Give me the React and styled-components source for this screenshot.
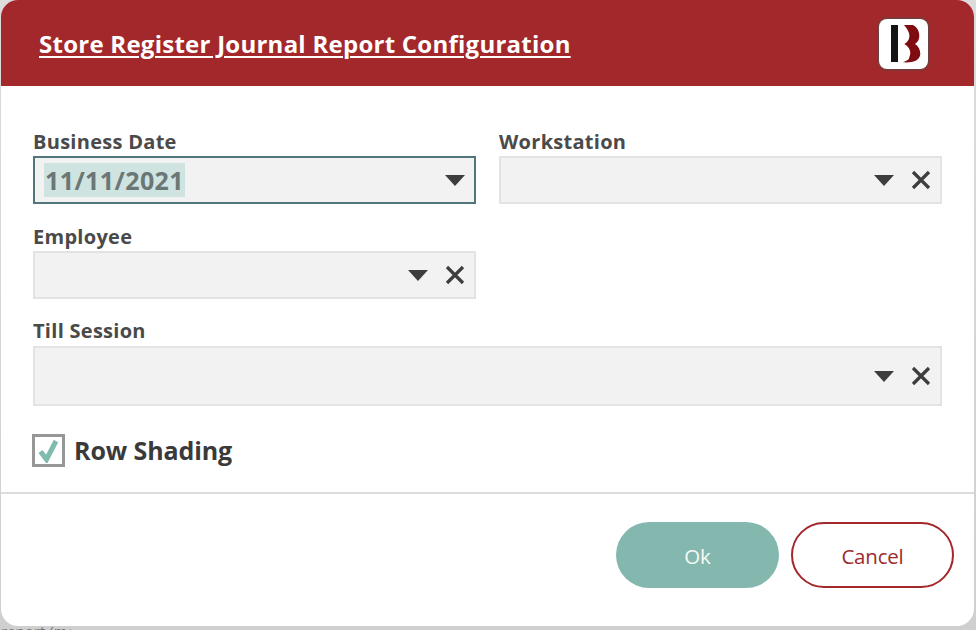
import React from "react";
import styled, { createGlobalStyle } from "styled-components";

const Global = createGlobalStyle`
  html, body { margin: 0; padding: 0; background: #c9c9c9; }
  body { width: 976px; height: 630px; overflow: hidden; font-family: "Open Sans", "Noto Sans", sans-serif; }
`;

const Page = styled.div`
  width: 976px;
  height: 630px;
  padding-left: 1px;
  box-sizing: border-box;
  background: linear-gradient(#dcdcdc, #cfcfcf);
`;

const Dialog = styled.div`
  width: 973px;
  height: 626px;
  background: #fff;
  border-radius: 17px;
  overflow: hidden;
  display: flex;
  flex-direction: column;
`;

const Behind = styled.div`
  width: 70px;
  height: 4px;
  overflow: hidden;
  font-size: 15px;
  line-height: 11px;
  color: #777;
  white-space: nowrap;
`;

const Header = styled.header`
  height: 86px;
  flex: none;
  background: #a3282b;
  display: flex;
  align-items: center;
  justify-content: space-between;
  padding: 2px 46px 0 38px;
  box-sizing: border-box;
`;

const Title = styled.h1`
  margin: 0;
  font-size: 24px;
  line-height: 30px;
  font-weight: 700;
  letter-spacing: 0.25px;
  color: #fff;
  text-decoration: underline;
  text-decoration-thickness: 2px;
  text-underline-offset: 3px;
`;

const Logo = styled.div`
  width: 49px;
  height: 50px;
  background: #fff;
  border-radius: 8px;
  box-shadow: 0 0 2px 1px #5a4a4a;
  display: flex;
  align-items: center;
  justify-content: center;
`;

const Body = styled.main`
  height: 408px;
  flex: none;
  box-sizing: border-box;
  padding: 45px 32px 0;
  border-bottom: 2px solid #dcdcdc;
`;

const Grid = styled.div`
  display: grid;
  grid-template-columns: 443px 443px;
  column-gap: 23px;
`;

const Field = styled.div`
  grid-column: ${(p) => (p.$wide ? "1 / -1" : "auto")};
  margin-bottom: ${(p) => p.$gap}px;
`;

const Label = styled.label`
  display: block;
  height: 25px;
  font-size: 20px;
  line-height: ${(p) => p.$lh || 21}px;
  font-weight: 700;
  letter-spacing: 0.28px;
  color: #4a4a4a;
`;

const Control = styled.div`
  height: ${(p) => p.$height}px;
  box-sizing: border-box;
  background: #f2f2f2;
  border: ${(p) => (p.$focus ? "2px solid #4f7678" : "2px solid #e3e3e3")};
  display: flex;
  align-items: center;
  padding: ${(p) => (p.$focus ? "0 9px" : "0 9px 0 0")};
`;

const Value = styled.span`
  background: #cfe3e1;
  color: #6b7775;
  font-size: 25px;
  line-height: 33px;
  font-weight: 700;
  padding: 1px 1px 0;
  letter-spacing: 0.4px;
`;

const Spacer = styled.div`
  flex: 1;
`;

const Arrow = styled.svg`
  width: 20px;
  height: 11px;
  flex: none;
  margin-right: ${(p) => p.$mr}px;
  fill: #3d3d3d;
`;

const Clear = styled.svg`
  width: 20px;
  height: 20px;
  flex: none;
  stroke: #3d3d3d;
  stroke-width: 3.2;
  fill: none;
`;

const CheckRow = styled.div`
  display: flex;
  align-items: center;
  gap: 9px;
  margin: 27px 0 0 -1px;
`;

const Box = styled.div`
  width: 33px;
  height: 33px;
  box-sizing: border-box;
  border: 3px solid #979797;
  background: #fff;
  display: flex;
  align-items: center;
  justify-content: center;
`;

const CheckLabel = styled.span`
  font-size: 25px;
  line-height: 34px;
  font-weight: 700;
  letter-spacing: -0.1px;
  color: #3a3a3a;
`;

const Footer = styled.footer`
  flex: 1;
  display: flex;
  justify-content: flex-end;
  align-items: flex-start;
  gap: 12px;
  padding: 28px 20px 0 0;
`;

const Button = styled.button`
  width: 163px;
  height: 66px;
  border-radius: 33px;
  box-sizing: border-box;
  font-family: inherit;
  font-size: 20.5px;
  letter-spacing: -0.2px;
  background: ${(p) => (p.$primary ? "#84b8ae" : "#fff")};
  color: ${(p) => (p.$primary ? "#f4faf8" : "#9b2b2e")};
  border: ${(p) => (p.$primary ? "none" : "2px solid #a3282b")};
  padding: 2px 0 0;
`;

const Select = ({ height, focus, value, clearable = true }) => (
  <Control $height={height} $focus={focus}>
    {value && <Value>{value}</Value>}
    <Spacer />
    <Arrow $mr={clearable ? 17 : 0} viewBox="0 0 20 11">
      <path d="M0 0H20L10 11Z" />
    </Arrow>
    {clearable && (
      <Clear viewBox="0 0 20 20">
        <path d="M2 2L18 18M18 2L2 18" />
      </Clear>
    )}
  </Control>
);

export default function App() {
  return (
    <>
      <Global />
      <Page>
        <Dialog>
          <Header>
            <Title>Store Register Journal Report Configuration</Title>
            <Logo>
              <svg width="34" height="46" viewBox="0 0 34 46">
                <rect x="4" y="4" width="7" height="37" fill="#141414" />
                <path
                  d="M17 4H25.7C30 6 32.3 10 32.3 14.7C32.3 18 31 21 28 23C31.5 25 33.3 29 33.3 33C33 37 30 40 25.7 40.7C22 41.5 19 41.5 16 41.3C19 40 22.3 39 22.3 36.3C23.3 34 23.5 31.5 23 29.7C22 26.5 20 24.5 17.3 23C20 21.5 22 19 22.3 16.3C22.8 13 21.7 9.7 17 4Z"
                  fill="#7e0c10"
                />
              </svg>
            </Logo>
          </Header>
          <Body>
            <Grid>
              <Field $gap={22}>
                <Label>Business Date</Label>
                <Select height={48} focus value="11/11/2021" clearable={false} />
              </Field>
              <Field $gap={22}>
                <Label>Workstation</Label>
                <Select height={48} />
              </Field>
              <Field $gap={22}>
                <Label>Employee</Label>
                <Select height={48} />
              </Field>
              <div />
              <Field $wide $gap={0}>
                <Label $lh={19}>Till Session</Label>
                <Select height={60} />
              </Field>
            </Grid>
            <CheckRow>
              <Box>
                <svg width="25" height="25" viewBox="0 0 25 25">
                  <path d="M4.5 13.5L10.5 21.5L20 3" fill="none" stroke="#7fbcae" strokeWidth="5" />
                </svg>
              </Box>
              <CheckLabel>Row Shading</CheckLabel>
            </CheckRow>
          </Body>
          <Footer>
            <Button $primary>Ok</Button>
            <Button>Cancel</Button>
          </Footer>
        </Dialog>
        <Behind>report (mon.)</Behind>
      </Page>
    </>
  );
}
